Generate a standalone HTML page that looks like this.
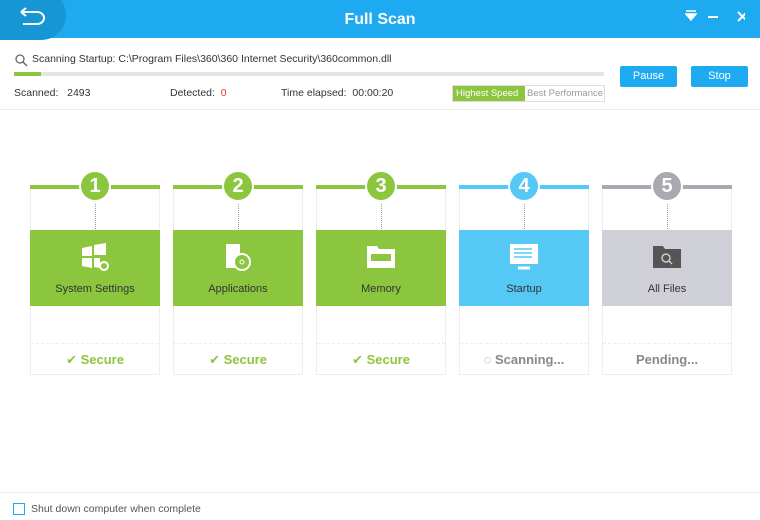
<!DOCTYPE html>
<html><head><style>
*{margin:0;padding:0;box-sizing:border-box}
body{width:760px;height:520px;background:#fff;font-family:"Liberation Sans","DejaVu Sans",sans-serif;position:relative;overflow:hidden;font-size:10.5px;color:#333}
.hdr{position:absolute;left:0;top:0;width:760px;height:38px;background:#1eaaf1}
.back{position:absolute;left:-20px;top:-10px;width:86px;height:50px;border-radius:0 25px 25px 0;background:#1796d6}
.title{position:absolute;left:0;width:760px;top:11px;text-align:center;color:#fff;font-weight:bold;font-size:16px}
.abs{position:absolute}
.btn{position:absolute;top:66px;height:21px;background:#1eaaf1;color:#fff;font-size:11px;text-align:center;line-height:21px;border-radius:2px}
.card{position:absolute;top:185px;width:130px;height:190px;border:1px solid #eee;border-top:none}
.line{position:absolute;top:0;left:-1px;width:130px;height:4px}
.circ{position:absolute;top:-15px;left:48px;width:32px;height:32px;border-radius:50%;border:2px solid #fff;color:#fff;font-weight:bold;font-size:20px;text-align:center;line-height:28px}
.dots{position:absolute;left:64px;top:19px;height:25px;border-left:1px dotted #999}
.blk{position:absolute;top:45px;left:-1px;width:130px;height:76px;color:#333;text-align:center;font-size:11px}
.blk span{position:absolute;left:0;right:0;top:53px}
.blk svg{position:absolute;left:49px;top:12px}
.div{position:absolute;top:158px;left:0;right:0;border-top:1px dashed #eee}
.st{position:absolute;top:167px;left:0;right:0;text-align:center;font-weight:bold;font-size:13px}
</style></head><body>
<div class="hdr"><div class="back"></div>
<svg class="abs" style="left:13px;top:7px" width="36" height="22"><path d="M8 5h16a7 6 0 0 1 0 12H10M8 5l5-4M8 5l5 4" fill="none" stroke="#fff" stroke-width="2"/></svg>
<div class="title">Full Scan</div>
<svg class="abs" style="left:685px;top:10px" width="60" height="14"><path d="M1 1h10M1 4h10l-5 6z" stroke="#fff" fill="#fff" stroke-width="1.5"/><path d="M23 7h10" stroke="#fff" stroke-width="2"/><path d="M53 2l9 9M62 2l-9 9" stroke="#fff" stroke-width="2"/></svg>
</div>
<svg class="abs" style="left:14px;top:53px" width="14" height="14"><circle cx="6" cy="6" r="4" fill="none" stroke="#666" stroke-width="1.3"/><path d="M9 9l4 4" stroke="#666" stroke-width="1.5"/></svg>
<div class="abs" style="left:32px;top:53px">Scanning Startup: C:\Program Files\360\360 Internet Security\360common.dll</div>
<div class="abs" style="left:14px;top:72px;width:590px;height:4px;background:#e5e5e5"></div>
<div class="abs" style="left:14px;top:72px;width:27px;height:4px;background:#8cc63f"></div>
<div class="abs" style="left:14px;top:87px">Scanned:&nbsp;&nbsp;&nbsp;2493</div>
<div class="abs" style="left:170px;top:87px">Detected:&nbsp;&nbsp;<span style="color:#e33">0</span></div>
<div class="abs" style="left:281px;top:87px">Time elapsed:&nbsp;&nbsp;00:00:20</div>
<div class="abs" style="left:452px;top:85px;width:153px;height:17px;border:1px solid #ddd;font-size:9.5px;line-height:15px"><span style="display:inline-block;background:#8cc63f;color:#fff;padding:0 3px;width:72px">Highest Speed</span><span style="color:#999;padding-left:2px">Best Performance</span></div>
<div class="btn" style="left:620px;width:57px">Pause</div>
<div class="btn" style="left:691px;width:57px">Stop</div>
<div class="abs" style="left:0;top:109px;width:760px;border-top:1px solid #eee"></div>

<div class="card" style="left:30px"><div class="line" style="background:#8cc63f"></div><div class="circ" style="background:#8cc63f">1</div><div class="dots"></div>
<div class="blk" style="background:#8cc63f"><svg width="32" height="30"><path d="M3 6l10-2v10H3zM15 3l12-2v12H15zM3 16h10v10L3 24zM15 16h6v10l-6-1z" fill="#fff"/><circle cx="25" cy="24" r="4" fill="none" stroke="#fff" stroke-width="2"/></svg><span>System Settings</span></div>
<div class="div"></div><div class="st" style="color:#8cc63f">✔ Secure</div></div>

<div class="card" style="left:173px"><div class="line" style="background:#8cc63f"></div><div class="circ" style="background:#8cc63f">2</div><div class="dots"></div>
<div class="blk" style="background:#8cc63f"><svg width="32" height="30"><rect x="4" y="2" width="14" height="24" fill="#fff"/><circle cx="20" cy="20" r="8" fill="#8cc63f" stroke="#fff" stroke-width="2"/><circle cx="20" cy="20" r="2" fill="none" stroke="#fff"/></svg><span>Applications</span></div>
<div class="div"></div><div class="st" style="color:#8cc63f">✔ Secure</div></div>

<div class="card" style="left:316px"><div class="line" style="background:#8cc63f"></div><div class="circ" style="background:#8cc63f">3</div><div class="dots"></div>
<div class="blk" style="background:#8cc63f"><svg width="32" height="30"><path d="M2 4h10l2 3h16v19H2z" fill="#fff"/><rect x="6" y="12" width="20" height="7" fill="#8cc63f"/></svg><span>Memory</span></div>
<div class="div"></div><div class="st" style="color:#8cc63f">✔ Secure</div></div>

<div class="card" style="left:459px"><div class="line" style="background:#55c8f5"></div><div class="circ" style="background:#55c8f5">4</div><div class="dots"></div>
<div class="blk" style="background:#55c8f5"><svg width="32" height="30"><rect x="2" y="2" width="28" height="20" fill="#fff"/><path d="M6 7h18M6 11h18M6 15h18" stroke="#55c8f5" stroke-width="1.5"/><path d="M10 26h12" stroke="#fff" stroke-width="3"/></svg><span>Startup</span></div>
<div class="div"></div><div class="st" style="color:#888">◌ Scanning...</div></div>

<div class="card" style="left:602px"><div class="line" style="background:#a9a9b1"></div><div class="circ" style="background:#a9a9b1">5</div><div class="dots"></div>
<div class="blk" style="background:#cfcfd7"><svg width="32" height="30"><path d="M2 4h10l2 3h16v19H2z" fill="#555"/><circle cx="15" cy="16" r="4" fill="none" stroke="#ccc" stroke-width="1.5"/><path d="M18 19l3 3" stroke="#ccc" stroke-width="1.5"/></svg><span>All Files</span></div>
<div class="div"></div><div class="st" style="color:#888">Pending...</div></div>

<div class="abs" style="left:0;top:492px;width:760px;border-top:1px solid #eee"></div>
<div class="abs" style="left:13px;top:503px;width:12px;height:12px;border:1px solid #1eaaf1"></div>
<div class="abs" style="left:31px;top:503px;color:#555">Shut down computer when complete</div>
</body></html>
